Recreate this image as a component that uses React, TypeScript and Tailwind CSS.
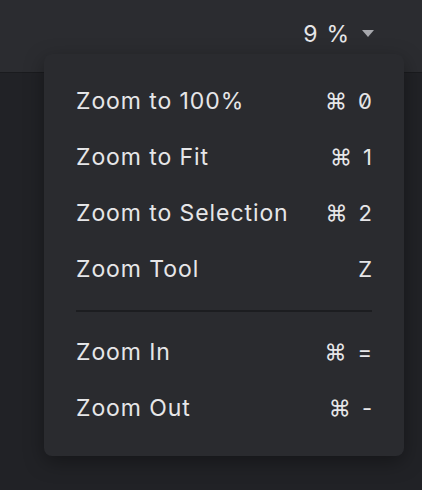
import React from "react";

const items1 = [
  { label: "Zoom to 100%", key: "0" },
  { label: "Zoom to Fit", key: "1" },
  { label: "Zoom to Selection", key: "2" },
  { label: "Zoom Tool", key: "Z", plain: true },
];
const items2 = [
  { label: "Zoom In", key: "=" },
  { label: "Zoom Out", key: "-" },
];

function Row({ label, k, plain }: { label: string; k: string; plain?: boolean }) {
  return (
    <div className="flex h-[56px] items-center justify-between">
      <span className="text-[23px] font-[370] tracking-[0.04em]">{label}</span>
      <span className="flex items-center gap-[11px] text-[22px] font-[370] [font-feature-settings:'zero']">
        {!plain && <span>⌘</span>}
        <span>{k}</span>
      </span>
    </div>
  );
}

export default function App() {
  return (
    <div
      className="relative h-[490px] w-[422px] overflow-hidden bg-[#212226] text-[#e6e6e8]"
      style={{ fontFamily: "Inter, 'Noto Sans', sans-serif" }}
    >
      <div className="flex h-[73px] items-start justify-end border-b border-[#1a1b1e] bg-[#2b2c30] pr-[48px] pt-[17px]">
        <div className="flex items-center gap-[13px] text-[23px] font-[370]">
          <span className="flex items-center gap-[9px]">
            <span>9</span>
            <span>%</span>
          </span>
          <svg width="12" height="8" viewBox="0 0 12 8">
            <path d="M0 0 H12 L6 7 Z" fill="#a7a8ad" />
          </svg>
        </div>
      </div>
      <div className="absolute left-[44px] top-[54px] w-[360px] rounded-[8px] bg-[#2a2b2f] px-[32px] pb-[20px] pt-[19px] shadow-[0_6px_20px_rgba(0,0,0,0.35)]">
        {items1.map((it) => (
          <Row key={it.label} label={it.label} k={it.key} plain={it.plain} />
        ))}
        <div className="mb-[12px] mt-[13px] h-[2px] bg-[#1c1d20]" />
        {items2.map((it) => (
          <Row key={it.label} label={it.label} k={it.key} />
        ))}
      </div>
    </div>
  );
}
